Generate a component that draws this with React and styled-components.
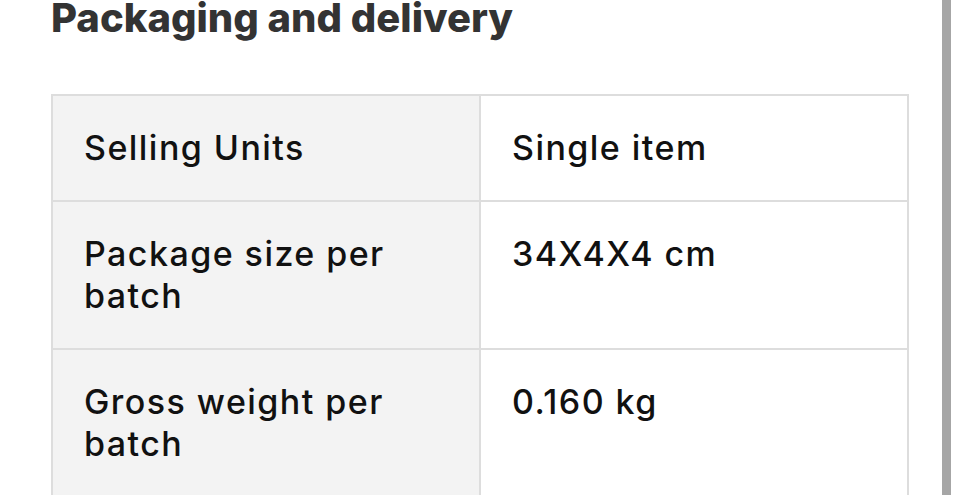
import React from 'react';
import styled, { createGlobalStyle } from 'styled-components';

const GlobalStyle = createGlobalStyle`
  html, body {
    margin: 0;
    padding: 0;
    background: #fff;
    overflow: hidden;
  }
  body {
    font-family: Inter, "Noto Sans", "Liberation Sans", sans-serif;
    -webkit-font-smoothing: antialiased;
  }
`;

const Page = styled.div`
  width: 960px;
  height: 495px;
  padding-left: 51px;
  box-sizing: border-box;
  overflow: hidden;
`;

const Title = styled.h2`
  margin: -7px 0 0;
  font-size: 40px;
  line-height: 50px;
  font-weight: 800;
  color: #333;
`;

const SpecTable = styled.table`
  margin-top: 51px;
  width: 858px;
  border-collapse: collapse;
  table-layout: fixed;
  border: 2px solid #ddd;
`;

const Cell = styled.td`
  width: 50%;
  padding: 31px 31px;
  border: 2px solid #ddd;
  vertical-align: top;
  font-size: 34px;
  line-height: 42px;
  letter-spacing: 1.45px;
  font-weight: 550;
  color: #111;
  background: ${p => (p.$label ? '#f3f3f3' : '#fff')};
`;

const ScrollThumb = styled.div`
  position: fixed;
  top: 0;
  right: 9px;
  width: 9px;
  height: 495px;
  background: #a6a6a6;
`;

const rows = [
  ['Selling Units', 'Single item'],
  ['Package size per batch', '34X4X4 cm'],
  ['Gross weight per batch', '0.160 kg'],
];

export default function App() {
  return (
    <>
      <GlobalStyle />
      <Page>
        <Title>Packaging and delivery</Title>
        <SpecTable>
          <tbody>
            {rows.map(([label, value]) => (
              <tr key={label}>
                <Cell $label>{label}</Cell>
                <Cell>{value}</Cell>
              </tr>
            ))}
          </tbody>
        </SpecTable>
      </Page>
      <ScrollThumb />
    </>
  );
}
